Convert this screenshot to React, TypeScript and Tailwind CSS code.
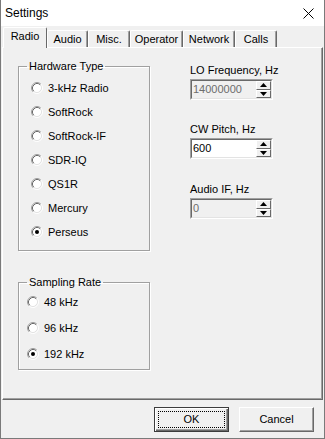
import React from "react";

const hardware = ["3-kHz Radio", "SoftRock", "SoftRock-IF", "SDR-IQ", "QS1R", "Mercury", "Perseus"];
const rates = ["48 kHz", "96 kHz", "192 kHz"];
const tabs = [
  { name: "Radio", w: "w-[44px]" },
  { name: "Audio", w: "w-[41px]" },
  { name: "Misc.", w: "w-[42px]" },
  { name: "Operator", w: "w-[53px]" },
  { name: "Network", w: "w-[52px]" },
  { name: "Calls", w: "w-[42px]" },
];

const RadioDot = ({ checked }: { checked?: boolean }) => (
  <svg width="12" height="12" viewBox="0 0 12 12" className="shrink-0">
    <circle cx="6" cy="6" r="4.5" fill="#fff" />
    <path d="M2.11 9.89A5.5 5.5 0 0 1 9.89 2.11" fill="none" stroke="#a0a0a0" />
    <path d="M9.89 2.11A5.5 5.5 0 0 1 2.11 9.89" fill="none" stroke="#fff" />
    <path d="M2.82 9.18A4.5 4.5 0 0 1 9.18 2.82" fill="none" stroke="#696969" />
    <path d="M9.18 2.82A4.5 4.5 0 0 1 2.82 9.18" fill="none" stroke="#e3e3e3" />
    {checked && <circle cx="6" cy="6" r="2" fill="#000" />}
  </svg>
);

const Arrow = ({ up }: { up?: boolean }) => (
  <svg width="7" height="4" viewBox="0 0 7 4">
    <path d={up ? "M3.5 0L7 4H0Z" : "M0 0H7L3.5 4Z"} fill="#000" />
  </svg>
);

const SpinBox = ({ value, disabled }: { value: string; disabled?: boolean }) => (
  <div className="w-[83px] h-[21px] border border-t-[#a0a0a0] border-l-[#a0a0a0] border-r-white border-b-white">
    <div className={`h-full flex border border-t-[#696969] border-l-[#696969] border-r-[#e3e3e3] border-b-[#e3e3e3] ${disabled ? "bg-[#f0f0f0]" : "bg-white"}`}>
      <div className={`flex-1 pl-[1px] leading-[17px] ${disabled ? "text-[#6d6d6d]" : "text-black"}`}>{value}</div>
      <div className="w-[15px] flex flex-col">
        <div className="flex-1 flex items-center justify-center bg-[#f0f0f0] border border-t-white border-l-white border-r-[#696969] border-b-[#696969]">
          <Arrow up />
        </div>
        <div className="flex-1 flex items-center justify-center bg-[#f0f0f0] border border-t-white border-l-white border-r-[#696969] border-b-[#696969]">
          <Arrow />
        </div>
      </div>
    </div>
  </div>
);

const App = () => {
  return (
    <div className="w-[325px] h-[439px] flex flex-col bg-[#f0f0f0] border-x border-b border-[#7a7a7a] font-['Liberation_Sans',Arial,sans-serif] text-[11px] text-black">
      {/* title bar */}
      <div className="h-[26px] shrink-0 bg-white flex items-center justify-between pl-[4px] pr-[10px]">
        <span className="text-[12px]">Settings</span>
        <svg width="11" height="11" viewBox="0 0 11 11">
          <path d="M0.5 0.5L10.5 10.5M10.5 0.5L0.5 10.5" stroke="#000" strokeWidth="1" />
        </svg>
      </div>

      {/* tabs */}
      <div className="h-[21px] shrink-0 flex items-end pl-[2px]">
        {tabs.map((t, i) =>
          i === 0 ? (
            <div
              key={t.name}
              className={`${t.w} h-[21px] -mb-[1px] relative z-10 bg-[#f0f0f0] flex justify-center pt-[2px] leading-[13px] border-t border-l border-white border-r border-r-[#696969] rounded-t-[2px]`}
            >
              {t.name}
            </div>
          ) : (
            <div
              key={t.name}
              className={`${t.w} h-[17px] flex justify-center pt-[2px] leading-[13px] border-t border-l border-white border-r border-r-[#696969] shadow-[inset_-1px_0_0_#a0a0a0] rounded-t-[2px]`}
            >
              {t.name}
            </div>
          )
        )}
      </div>

      {/* panel */}
      <div className="h-[353px] shrink-0 mx-[1px] flex border border-t-white border-l-white border-r-[#696969] border-b-[#696969] shadow-[inset_-1px_-1px_0_#a0a0a0]">
        <div className="pl-[15px] pt-[12px]">
          <fieldset className="w-[132px] border border-[#a0a0a0] shadow-[inset_1px_1px_0_#fff,1px_1px_0_#fff] pt-[3px] pb-[6px]">
            <legend className="ml-[8px] px-[2px] leading-[13px]">Hardware Type</legend>
            {hardware.map((h) => (
              <div key={h} className="h-[24px] flex items-center pl-[12px] gap-[5px]">
                <RadioDot checked={h === "Perseus"} />
                <span>{h}</span>
              </div>
            ))}
          </fieldset>

          <fieldset className="w-[132px] mt-[25px] border border-[#a0a0a0] shadow-[inset_1px_1px_0_#fff,1px_1px_0_#fff] pb-[2px]">
            <legend className="ml-[8px] px-[2px] leading-[13px]">Sampling Rate</legend>
            {rates.map((r) => (
              <div key={r} className="h-[26px] flex items-center pl-[8px] gap-[5px]">
                <RadioDot checked={r === "192 kHz"} />
                <span>{r}</span>
              </div>
            ))}
          </fieldset>
        </div>

        <div className="ml-[40px] pt-[16px] flex flex-col">
          <div className="leading-[13px] mb-[2px]">LO Frequency, Hz</div>
          <SpinBox value="14000000" disabled />
          <div className="leading-[13px] mb-[2px] mt-[23px]">CW Pitch, Hz</div>
          <SpinBox value="600" />
          <div className="leading-[13px] mb-[2px] mt-[24px]">Audio IF, Hz</div>
          <SpinBox value="0" disabled />
        </div>
      </div>

      {/* buttons */}
      <div className="flex-1 flex justify-end items-start gap-[10px] pt-[7px] pr-[10px]">
        <button className="w-[75px] h-[25px] border border-[#3c3c3c] bg-[#f0f0f0] shadow-[inset_1px_1px_0_#fff,inset_-1px_-1px_0_#696969,inset_-2px_-2px_0_#a0a0a0] p-[3px] flex">
          <span className="flex-1 flex items-center justify-center border border-dotted border-black leading-[13px]">OK</span>
        </button>
        <button className="w-[75px] h-[25px] bg-[#f0f0f0] border border-t-white border-l-white border-r-[#696969] border-b-[#696969] shadow-[inset_-1px_-1px_0_#a0a0a0] flex items-center justify-center leading-[13px]">
          Cancel
        </button>
      </div>
    </div>
  );
};

export default App;
